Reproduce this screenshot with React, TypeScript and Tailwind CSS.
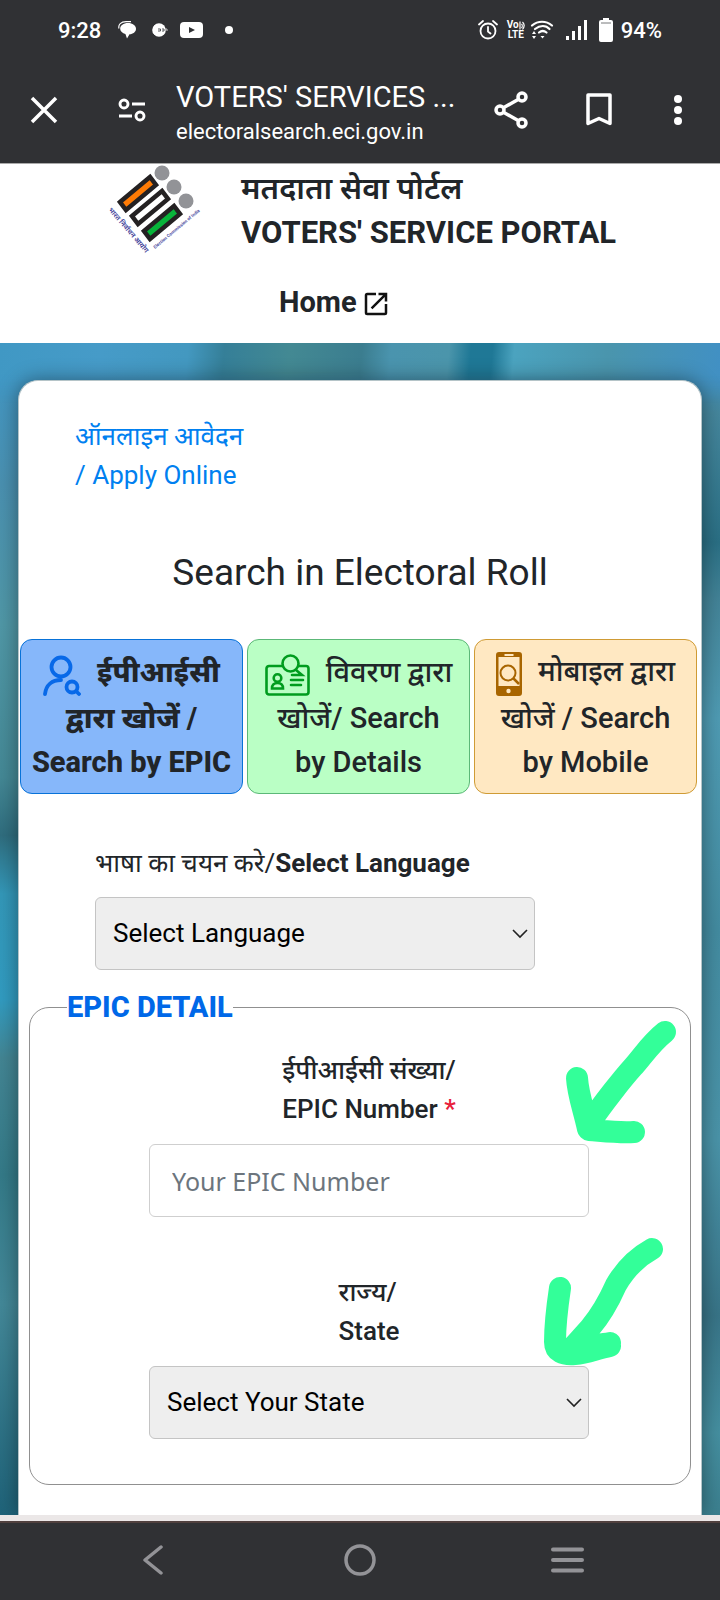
import type { ReactNode } from "react";

const font = "font-[Roboto,'Noto_Sans','Noto_Sans_Devanagari',sans-serif]";

function StatusBar() {
  return (
    <div className="flex h-[60px] items-center justify-between pl-[58px] pr-[58px] text-[22px]">
      <div className="flex items-center">
        <span className="w-[60px] font-medium">9:28</span>
        <svg className="h-[18px] w-[18px]" viewBox="0 0 18 18" fill="currentColor" aria-hidden="true">
          <path d="M10 2c4.500 0 8 2.500 8 5.700s-3 5.300-6.500 5.600L9 17.500 7.400 13C4.400 12.200 2.400 10.400 2.200 8 2 4.500 5.500 2 10 2Z" />
          <path d="M1 7.500C0 3.500 3 .700 8 .700h5" fill="none" stroke="currentColor" strokeWidth="1.200" />
        </svg>
        <svg className="ml-4 h-4 w-4" viewBox="0 0 16 16" aria-hidden="true">
          <circle cx="7" cy="8" r="6.800" fill="currentColor" />
          <path d="M1 4 4 1M1 12l3 3" stroke="#303134" strokeWidth="1" />
          <path d="M6 7h2.500v2H6M10 7h2v2h-2" fill="none" stroke="#55565a" strokeWidth="1" />
          <path d="M13 7h2v2" fill="none" stroke="#c8c8c8" strokeWidth="1" />
        </svg>
        <svg className="ml-3 h-4 w-[23px]" viewBox="0 0 23 16" aria-hidden="true">
          <rect width="23" height="16" rx="4" fill="currentColor" />
          <path d="m9 5 6 3-6 3Z" fill="#303134" />
        </svg>
        <span className="ml-[22px] h-2 w-2 rounded-full bg-white" />
      </div>
      <div className="flex items-center">
        <svg className="h-5 w-5" viewBox="0 0 20 20" fill="none" stroke="currentColor" strokeWidth="1.800" strokeLinecap="round" aria-hidden="true">
          <circle cx="10" cy="11" r="7.500" />
          <path d="M10 7v4.500l2.500 2M1 4.500 5 1M19 4.500 15 1" />
        </svg>
        <span className="ml-2 flex h-5 w-[20px] flex-col items-center text-[10px] leading-[10px] font-bold">
          <span className="flex items-center">
            Vo
            <svg className="h-[9px] w-[6px]" viewBox="0 0 6 9" fill="none" stroke="currentColor" strokeWidth="1.200" aria-hidden="true">
              <path d="M1 .500v8M2.500 3c1 1 1 3 0 4M3.500 1c2 2 2 5 0 7.500" />
            </svg>
          </span>
          <span>LTE</span>
        </span>
        <svg className="ml-1 h-[20px] w-[24px]" viewBox="0 0 24 20" fill="none" stroke="currentColor" strokeWidth="2.200" strokeLinecap="round" aria-hidden="true">
          <path d="M2 5.500C8 .500 16 .500 22 5.500M5 9c5-4 11-4 14.500 0M9 12.500c2.500-2 5-2 7.500 0" />
          <path d="m12.500 18.500-2-2.500h4ZM4 11l2 3H2ZM4 19l2-3H2Z" fill="currentColor" stroke="none" />
        </svg>
        <svg className="ml-3 h-5 w-[21px]" viewBox="0 0 21 20" fill="currentColor" aria-hidden="true">
          <path d="M0 16h3v4H0zM6 11h3v9H6zM12 6h3v14h-3zM18 0h3v20h-3z" />
        </svg>
        <svg className="mr-2 ml-3 h-6 w-[14px]" viewBox="0 0 14 24" fill="currentColor" aria-hidden="true">
          <path d="M4 0h6v2h2a2 2 0 0 1 2 2v18a2 2 0 0 1-2 2H2a2 2 0 0 1-2-2V4a2 2 0 0 1 2-2h2Z" />
          <path d="M2 5h10" stroke="#77787a" />
        </svg>
        <span className="font-medium">94%</span>
      </div>
    </div>
  );
}

function BrowserBar() {
  return (
    <div className="flex h-[103px] items-start">
      <button aria-label="Close" className="mt-[36px] ml-[30px]">
        <svg className="h-7 w-7" viewBox="0 0 28 28" stroke="currentColor" strokeWidth="3.500" aria-hidden="true">
          <path d="m2 2 24 24M26 2 2 26" />
        </svg>
      </button>
      <button aria-label="Site settings" className="mt-[38px] ml-[60px]">
        <svg className="h-6 w-7" viewBox="0 0 28 24" fill="none" stroke="currentColor" strokeWidth="2.900" aria-hidden="true">
          <circle cx="6" cy="6" r="4" />
          <path d="M14 6h13M1 18h13" />
          <circle cx="22" cy="18" r="4" />
        </svg>
      </button>
      <div className="ml-[30px] min-w-0 flex-1">
        <p className="mt-[18px] truncate text-[29px] leading-[38px]">VOTERS' SERVICES ...</p>
        <p className="truncate text-[22px] leading-[32px]">electoralsearch.eci.gov.in</p>
      </div>
      <button aria-label="Share" className="mt-[30px] ml-4">
        <svg className="h-10 w-[36px]" viewBox="0 0 36 40" fill="none" stroke="currentColor" strokeWidth="3.500" aria-hidden="true">
          <circle cx="6" cy="20" r="4" />
          <circle cx="28" cy="7" r="4" />
          <circle cx="28" cy="33" r="4" />
          <path d="m9 18 16-9M9 22l16 9" />
        </svg>
      </button>
      <button aria-label="Bookmark" className="mt-[33px] ml-[55px]">
        <svg className="h-[34px] w-[28px]" viewBox="0 0 28 34" fill="none" stroke="currentColor" strokeWidth="3.500" strokeLinejoin="round" aria-hidden="true">
          <path d="M3 2h22v28.500l-11-5-11 5Z" />
        </svg>
      </button>
      <button aria-label="More options" className="mt-[35px] mr-[38px] ml-[61px]">
        <svg className="h-[30px] w-[8px]" viewBox="0 0 8 30" fill="currentColor" aria-hidden="true">
          <circle cx="4" cy="4" r="4" />
          <circle cx="4" cy="15" r="4" />
          <circle cx="4" cy="26" r="4" />
        </svg>
      </button>
    </div>
  );
}

function EciLogo() {
  return (
    <svg className="h-[90px] w-[94px] shrink-0 overflow-visible" viewBox="0 0 94 90" role="img" aria-label="Election Commission of India">
      <g fill="#929397">
        <circle cx="55" cy="9" r="7.500" />
        <circle cx="67" cy="23" r="7.500" />
        <circle cx="79" cy="37" r="7.500" />
      </g>
      <g stroke="#242122" strokeWidth="4.500">
        <path d="M13 38 43 13l6 8-30 25Z" fill="#ff7b05" />
        <path d="M25 52 55 27l6 8-30 25Z" fill="#fff" />
        <path d="M37 67 67 42l6 8-30 25Z" fill="#08b43a" />
      </g>
      <g fill="#3b3b97" fontWeight="600">
        <text transform="translate(1 46) rotate(49)" fontSize="7">भारत निर्वाचन आयोग</text>
        <text transform="translate(48 85) rotate(-40)" fontSize="4.500">Election Commission of India</text>
      </g>
    </svg>
  );
}

function SiteHeader() {
  return (
    <header className="h-[180px] border-t border-[#aaa] bg-white text-[#212529]">
      <div className="flex items-start pl-[107px]">
        <EciLogo />
        <div className="ml-[40px] text-[31px] leading-[44px] font-bold">
          <p className="pt-[3px] font-semibold">मतदाता सेवा पोर्टल</p>
          <h1 className="whitespace-nowrap">VOTERS' SERVICE PORTAL</h1>
        </div>
      </div>
      <a href="#home" className="ml-[279px] mt-[27px] inline-flex items-center gap-1 text-[29px] leading-[40px] font-bold">
        Home
        <svg className="mt-1 h-[30px] w-[30px]" viewBox="0 0 24 24" fill="#111" aria-hidden="true">
          <path d="M19 19H5V5h7V3H5a2 2 0 0 0-2 2v14a2 2 0 0 0 2 2h14a2 2 0 0 0 2-2v-7h-2v7ZM14 3v2h3.590l-9.830 9.830 1.410 1.410L19 6.410V10h2V3h-7Z" />
        </svg>
      </a>
    </header>
  );
}

function PersonSearchIcon() {
  return (
    <svg className="mr-4 inline-block h-[41px] w-[38px] align-[-14px]" viewBox="0 0 38 41" fill="none" stroke="#0869e8" strokeWidth="3.800" strokeLinecap="round" aria-hidden="true">
      <circle cx="18" cy="12" r="9.500" />
      <path d="M2 39c1-9 7-14 16-14" />
      <circle cx="29" cy="32" r="5.500" />
      <path d="m33 36 3 3" />
    </svg>
  );
}

function IdSearchIcon() {
  return (
    <svg className="mr-4 inline-block h-[42px] w-[45px] align-[-14px]" viewBox="0 0 45 42" fill="none" stroke="#009c1e" strokeWidth="2.600" strokeLinecap="round" aria-hidden="true">
      <path d="M17 12H4a2.500 2.500 0 0 0-2.500 2.500v23.500A2.500 2.500 0 0 0 4 40.500h37a2.500 2.500 0 0 0 2.500-2.500v-23.500A2.500 2.500 0 0 0 41 12h-7" />
      <circle cx="25.500" cy="9.500" r="8" />
      <path d="m31 16 6 5H27M26 26h12M26 31h10" />
      <circle cx="12.500" cy="24" r="3.800" />
      <path d="M7 34.500c0-4 2-5.500 5.500-5.500s5.500 1.500 5.500 5.500Z" />
    </svg>
  );
}

function PhoneSearchIcon() {
  return (
    <svg className="mr-4 inline-block h-[44px] w-[26px] align-[-15px]" viewBox="0 0 26 44" aria-hidden="true">
      <path fill="#a86500" fillRule="evenodd" d="M3 0h20a3 3 0 0 1 3 3v38a3 3 0 0 1-3 3H3a3 3 0 0 1-3-3V3a3 3 0 0 1 3-3ZM2.500 5v29h21V5Zm6-3v2h9V2Z" />
      <circle cx="12.500" cy="39" r="2.200" fill="#ffe8c2" />
      <g fill="none" stroke="#a86500" strokeWidth="2">
        <circle cx="12" cy="21" r="7.500" />
        <path d="m17 26 6 6" strokeWidth="2.500" />
      </g>
    </svg>
  );
}

function Tab({ className, children, selected = false }: { className: string; children: ReactNode; selected?: boolean }) {
  return (
    <button role="tab" aria-selected={selected} className={`h-[155px] flex-1 basis-0 rounded-xl border text-center text-[29px] leading-[44px] whitespace-nowrap text-[#212529] ${className}`}>
      {children}
    </button>
  );
}

function Select({ id, label }: { id: string; label: string }) {
  return (
    <div className="relative w-[440px] max-w-full">
      <select id={id} className="block h-[73px] w-full appearance-none rounded-md border border-[#c4c4c4] bg-[#eee] px-[17px] text-[26px] text-black">
        <option>{label}</option>
      </select>
      <svg className="pointer-events-none absolute top-8 right-[6px] h-[10px] w-[18px]" viewBox="0 0 18 10" fill="none" stroke="#222" strokeWidth="1.600" aria-hidden="true">
        <path d="m2 1 7 7 7-7" />
      </svg>
    </div>
  );
}

function Arrows() {
  return (
    <svg className="pointer-events-none absolute top-5 right-0 h-[380px] w-[170px]" viewBox="0 0 170 380" fill="none" stroke="#33ff99" strokeWidth="22" strokeLinecap="round" strokeLinejoin="round" aria-hidden="true">
      <path d="M144 25C130 36 121 50 112 60S82 96 68 117M56 71c1 17 7 32 11 51l1 1c14 1 30 3 45 2" />
      <path d="M131 242c-18 10-28 22-36 36-8 18-15 30-26 43l-18 20M39 281c-3 20-5 35-5 54 0 10 8 13 20 12 13-1 20-5 35-8M55 341c12-3 22-3 34-5" />
    </svg>
  );
}

function NavBar() {
  return (
    <nav className="h-[85px] border-t-[6px] border-[#ebe7e7] bg-[#303134] text-[#939397]">
      <div className="flex h-full items-center justify-between border-t-2 border-[#50403e] px-[136px] pb-[3px]">
        <button aria-label="Back" className="flex w-[33px] justify-center">
          <svg className="h-[30px] w-[22px]" viewBox="0 0 22 30" fill="none" stroke="currentColor" strokeWidth="3.500" strokeLinecap="round" strokeLinejoin="round" aria-hidden="true">
            <path d="M19 2 3 15l16 13" />
          </svg>
        </button>
        <button aria-label="Home screen" className="flex w-[33px] justify-center">
          <svg className="h-8 w-8" viewBox="0 0 32 32" fill="none" stroke="currentColor" strokeWidth="3.500" aria-hidden="true">
            <circle cx="16" cy="16" r="14" />
          </svg>
        </button>
        <button aria-label="Recent apps">
          <svg className="h-[26px] w-[33px]" viewBox="0 0 33 26" stroke="currentColor" strokeWidth="4" strokeLinecap="round" aria-hidden="true">
            <path d="M2 2.500h29M2 13h29M2 23.500h29" />
          </svg>
        </button>
      </div>
    </nav>
  );
}

export default function App() {
  return (
    <div className={`flex min-h-screen flex-col bg-white ${font}`}>
      <div className="bg-[#303134] text-white">
        <StatusBar />
        <BrowserBar />
      </div>
      <SiteHeader />
      <main className="relative flex flex-1 flex-col overflow-hidden px-[18px] pt-[37px] [background:linear-gradient(#4098c8,#4a90b0_12%,#5097a6_24%,#448895_37%,#2f6d7e_42%,#3397b8_47%,#319bc0_56%,#438593_61%,#347a88_71%,#438898_82%,#1f6379)_left/50%_100%_no-repeat,linear-gradient(#3d93cc,#45869c_6%,#2a6f84_17%,#438397_22%,#4f9bb3_32%,#438ba0_50%,#4a93a8_68%,#387487_83%,#458fa0_93%,#3b7f8e)_right/50%_100%_no-repeat]">
        <div className="absolute inset-x-0 top-0 h-[60px] bg-[linear-gradient(95deg,#4098c4,#469bc8_14%,#4398c0_26%,#357f98_31%,#438993_40%,#3b7d8f_50%,#4a94ae_54%,#4b95ab_62%,#1f7896_65%,#1f7896_68%,#4ba3bf_71%,#4a95ad_84%,#4190c4)] mask-b-from-50%" />
        <div className="relative flex-1 rounded-t-[20px] border-x border-t border-[#b5c4c8] bg-white pb-[27px] shadow-[0_0_20px_rgba(0,0,0,0.4)]">
          <a href="#apply" className="mt-[36px] ml-[56px] block w-[190px] text-[26px] leading-[39px] text-[#0080f0]">
            ऑनलाइन आवेदन
            <br />/ Apply Online
          </a>
          <h2 className="mt-[54px] text-center text-[37px] leading-[48px] text-[#212529]">Search in Electoral Roll</h2>
          <div role="tablist" className="mt-[42px] mr-1 ml-px flex gap-1">
            <Tab selected className="border-[#0872d8] bg-[#86b7fa] font-extrabold">
              <PersonSearchIcon />ईपीआईसी<br />द्वारा खोजें /<br />Search by EPIC
            </Tab>
            <Tab className="border-[#5cb878] bg-[#baffc5] font-medium">
              <IdSearchIcon />विवरण द्वारा<br />खोजें/ Search<br />by Details
            </Tab>
            <Tab className="border-[#cf9b35] bg-[#ffe8c2] font-medium">
              <PhoneSearchIcon />मोबाइल द्वारा<br />खोजें / Search<br />by Mobile
            </Tab>
          </div>
          <div className="mt-[50px] ml-[76px] text-[#212529]">
            <label htmlFor="language" className="mb-[14px] block text-[26px] leading-[39px]">
              भाषा का चयन करे/<span className="font-bold">Select Language</span>
            </label>
            <Select id="language" label="Select Language" />
          </div>
          <div className="relative mx-[10px] mt-[17px]">
            <fieldset className="rounded-[20px] border border-[#909090] pb-[45px] pl-[18px] text-[26px] leading-[39px] text-[#212529]">
              <legend className="ml-[19px] text-[29px] leading-[40px] font-extrabold text-[#0068e8]">EPIC DETAIL</legend>
              <div className="flex flex-col items-center">
                <label htmlFor="epic" className="mt-[24px] mb-[15px] font-medium">
                  ईपीआईसी संख्या/<br />EPIC Number <span className="text-[#e8203a]">*</span>
                </label>
                <input id="epic" placeholder="Your EPIC Number" className="h-[73px] w-[440px] max-w-full rounded-md border border-[#cfcfcf] bg-white px-[22px] font-['Noto_Sans'] text-[25px] placeholder:text-[#6c757d]" />
                <label htmlFor="state" className="mt-[56px] mb-[15px] font-medium">
                  राज्य/<br />State
                </label>
                <Select id="state" label="Select Your State" />
              </div>
            </fieldset>
            <Arrows />
          </div>
        </div>
      </main>
      <NavBar />
    </div>
  );
}
